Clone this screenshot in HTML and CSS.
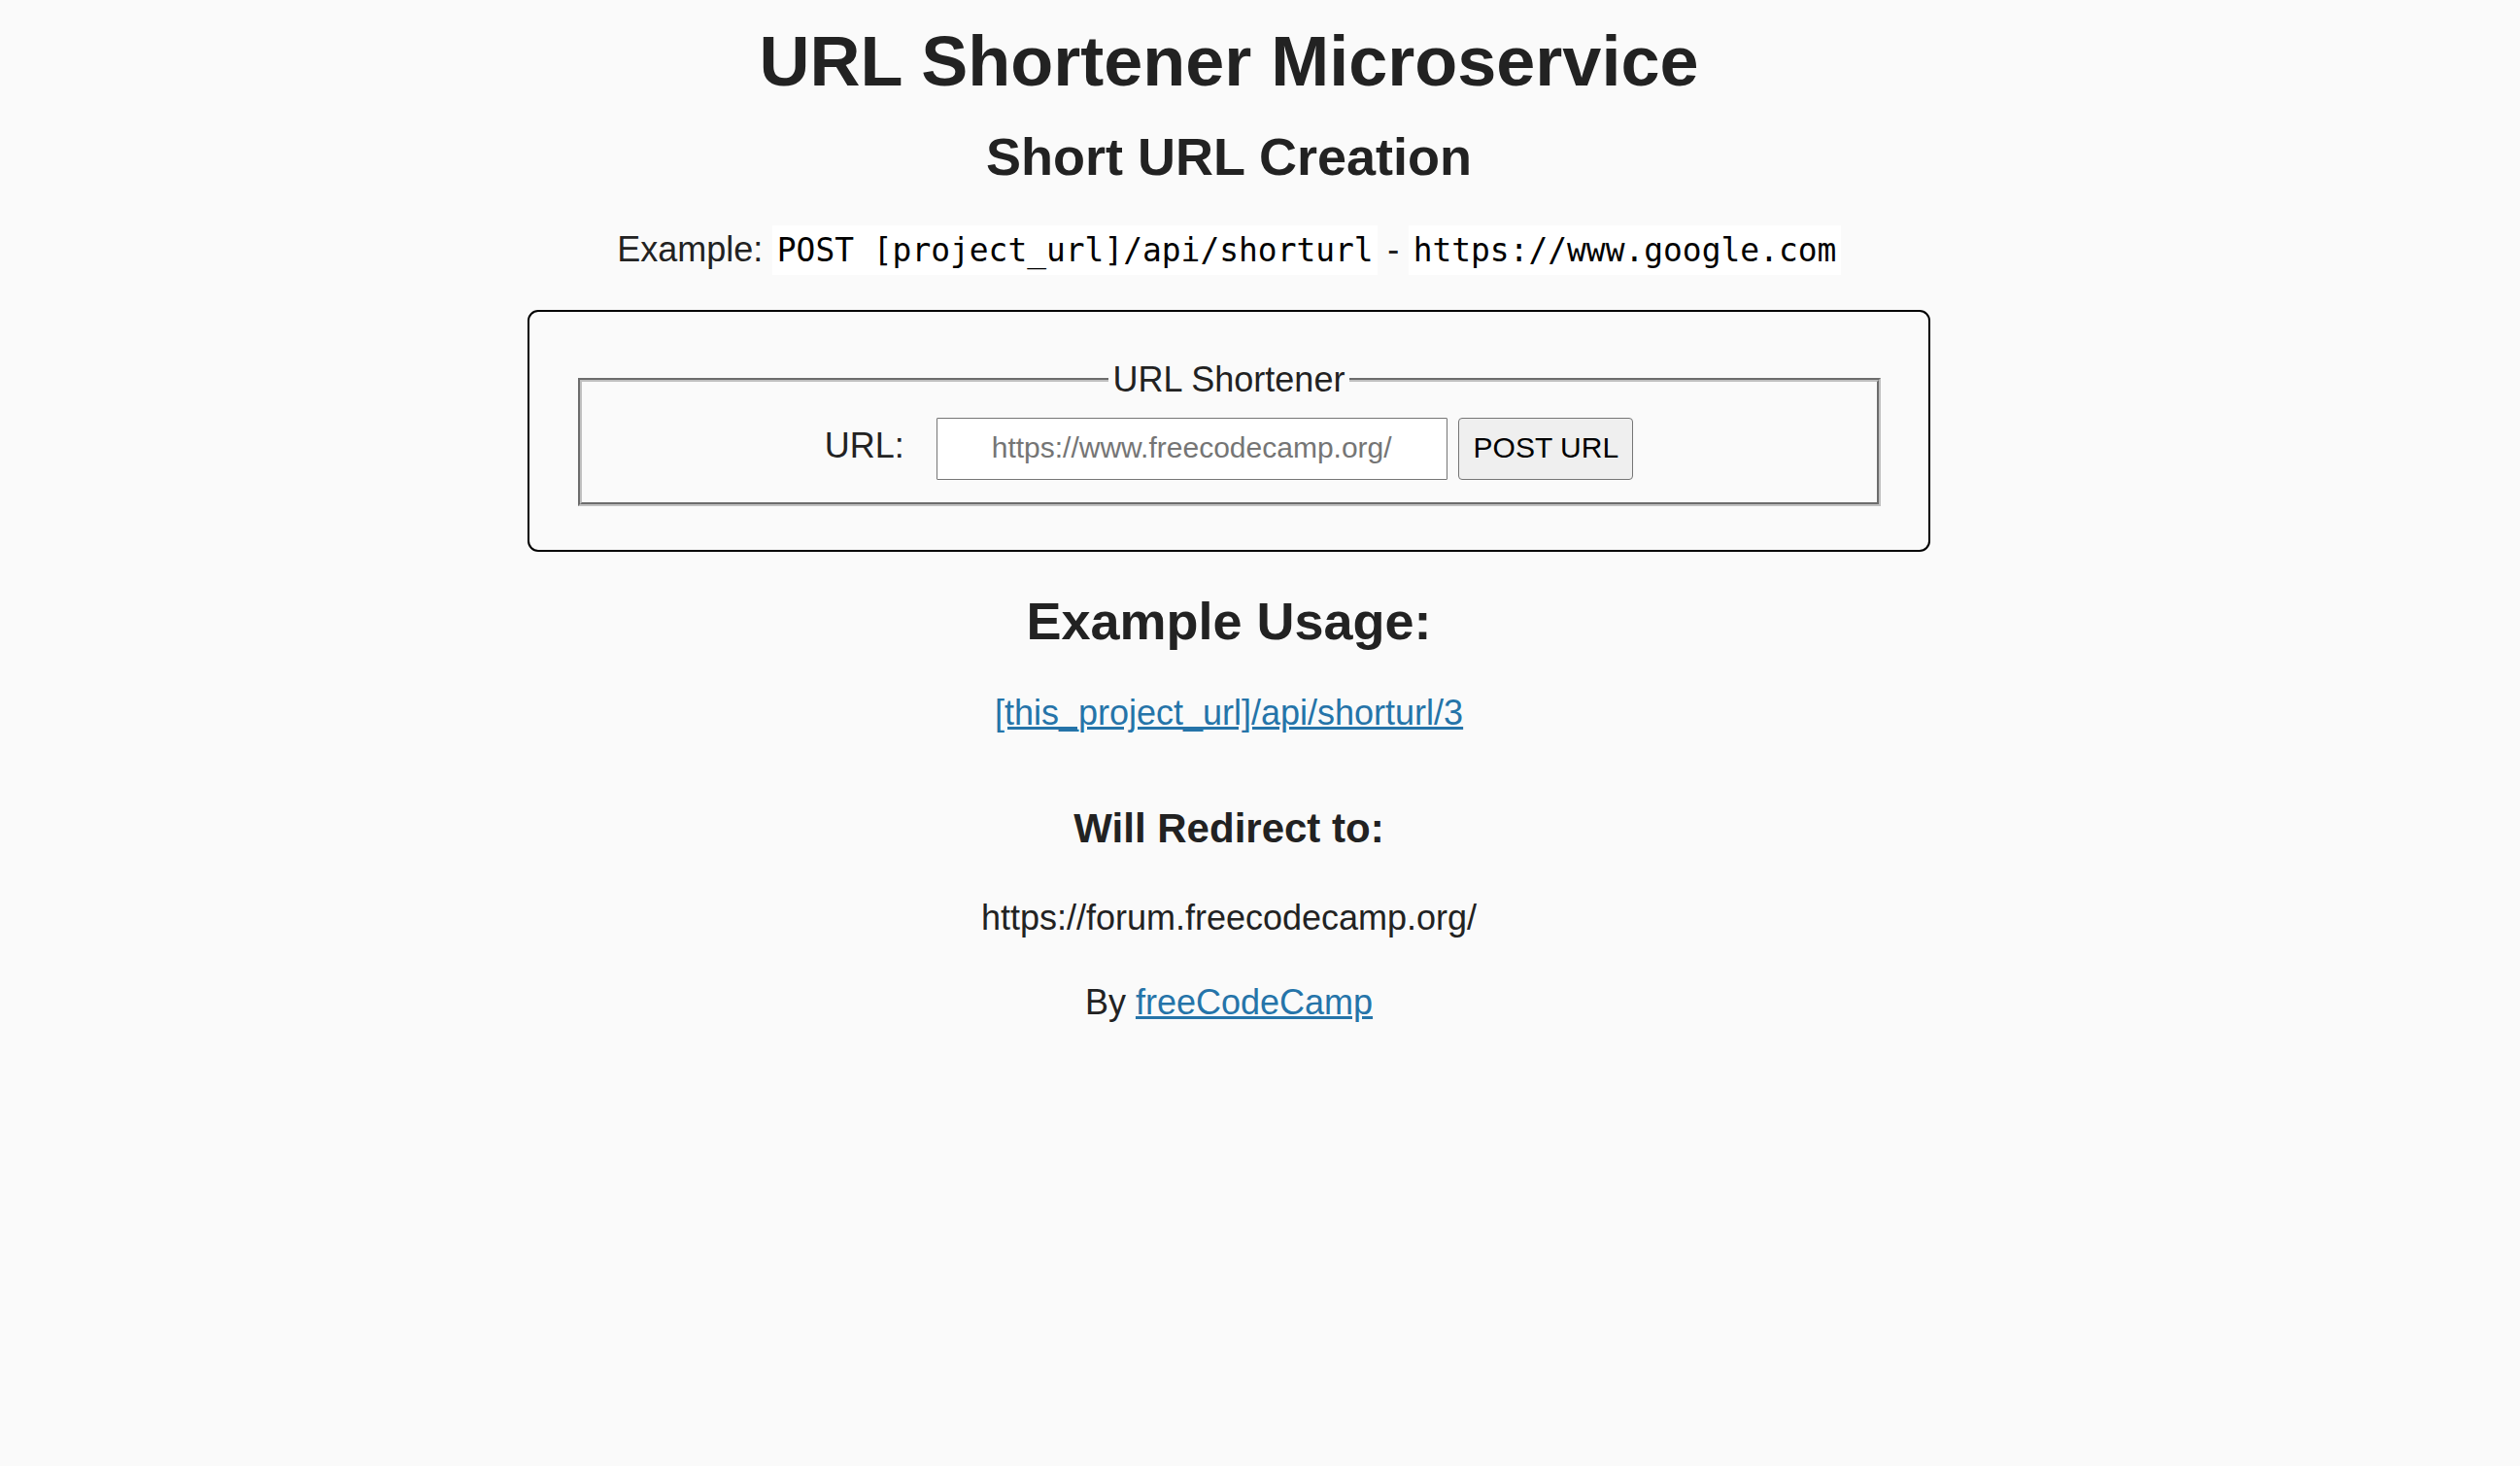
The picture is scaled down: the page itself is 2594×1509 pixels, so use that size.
FILE: index.html
```html
<!DOCTYPE html>
<html lang="en">
<head>
<meta charset="utf-8">
<title>URL Shortener Microservice | freeCodeCamp.org</title>
<link rel="stylesheet" href="styles.css">
</head>
<body>
<h1 class="title">URL Shortener Microservice</h1>
<div class="container">
  <h2 class="section-title">Short URL Creation</h2>
  <p class="example">Example: <code class="code">POST [project_url]/api/shorturl</code> - <code class="code">https://www.google.com</code></p>
  <form class="shortener" action="api/shorturl" method="POST">
    <fieldset class="fields">
      <legend class="legend">URL Shortener</legend>
      <div class="row">
        <label class="label" for="url_input">URL:</label>
        <input class="url-input" id="url_input" type="text" name="url" placeholder="https://www.freecodecamp.org/">
        <input class="submit" type="submit" value="POST URL">
      </div>
    </fieldset>
  </form>
  <h2 class="section-title section-title--usage">Example Usage:</h2>
  <p class="usage"><a class="link" href="#">[this_project_url]/api/shorturl/3</a></p>
  <h3 class="redirect-title">Will Redirect to:</h3>
  <p class="redirect-url">https://forum.freecodecamp.org/</p>
</div>
<div class="footer">
  <p class="credit">By <a class="link" href="#">freeCodeCamp</a></p>
</div>
</body>
</html>
```

FILE: styles.css
```css
html {
  background: #fafafa;
}

body {
  margin: 0 82px 0 18px;
  font-family: "Liberation Sans", Arial, Helvetica, sans-serif;
  font-size: 36px;
  line-height: 50.4px;
  color: #222;
  background: #fafafa;
  text-align: center;
}

.title {
  font-size: 72px;
  font-weight: bold;
  margin: 37.8px 0 48.24px;
}

.section-title {
  font-size: 54px;
  font-weight: bold;
  margin: 44.82px 0;
}

.section-title--usage {
  margin-top: 46.5px;
}

.example,
.usage,
.redirect-url,
.credit {
  margin: 36px 0;
}

.code {
  font-family: "DejaVu Sans Mono", "Liberation Mono", monospace;
  font-size: 32.9px;
  padding: 6px 4.5px;
  color: #000;
  background: #fff;
}

.shortener {
  width: 1350px;
  padding: 45px;
  margin: 36px auto 33.75px;
  border: 2px solid #000;
  border-radius: 11px;
}

.fields {
  margin: 0 4.5px;
  padding: 12.6px 27px 22.5px;
  border: 4.5px groove rgb(192, 192, 192);
  min-inline-size: min-content;
}

.legend {
  padding: 0 4.5px;
  margin: 0 auto;
}

.row {
  display: flex;
  justify-content: center;
  align-items: center;
  padding-top: 1px;
}

.label {
  margin: 0 33px 5px 0;
}

.url-input {
  box-sizing: border-box;
  width: 526px;
  height: 64px;
  margin: 0 11.7px 0 0;
  padding: 0 11px 2px;
  border: 1.5px solid #767676;
  border-radius: 1px;
  background: #fff;
  color: #222;
  font-family: "Liberation Sans", Arial, sans-serif;
  font-size: 30px;
  text-align: center;
}

.url-input::placeholder {
  color: #757575;
}

.submit {
  box-sizing: border-box;
  width: 180px;
  height: 64px;
  margin: 0;
  padding: 0 4px 2px;
  border: 1.5px solid #767676;
  border-radius: 4px;
  background: #efefef;
  color: #000;
  font-family: "Liberation Sans", Arial, sans-serif;
  font-size: 30px;
}

.redirect-title {
  font-size: 42px;
  font-weight: bold;
  margin: 68px 0 42px;
}

.link {
  color: #2574a9;
}
```
